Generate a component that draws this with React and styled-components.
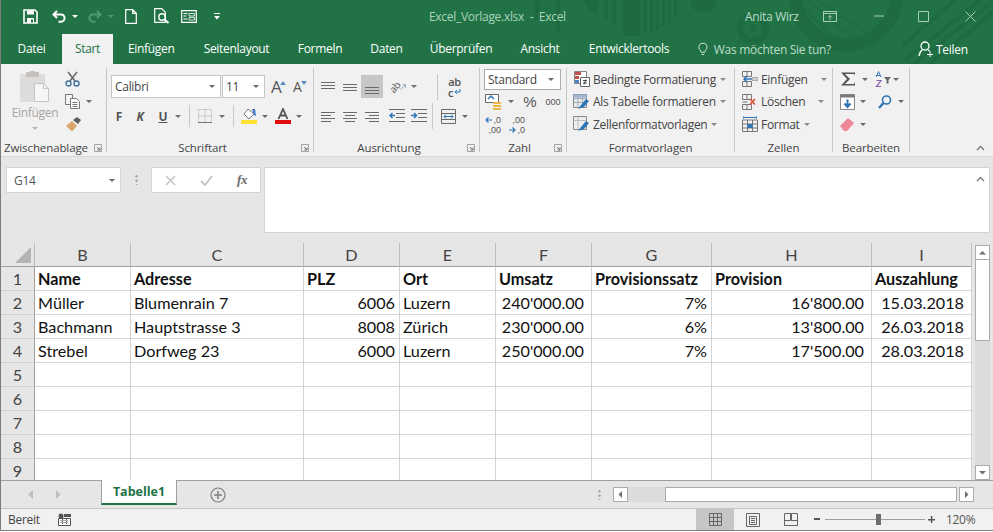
import React from 'react';
import styled, { createGlobalStyle } from 'styled-components';

const green = '#217346';
const ui = '"Open Sans", "Noto Sans", sans-serif';

const Global = createGlobalStyle`
  html, body { margin: 0; padding: 0; background: #fff; }
  * { box-sizing: border-box; }
`;

const Window = styled.div`
  width: 993px;
  height: 531px;
  display: flex;
  flex-direction: column;
  border-left: 1px solid #7d7d7d;
  font-family: ${ui};
  font-size: 12px;
  letter-spacing: -0.3px;
  color: #444;
  overflow: hidden;
`;

/* title + tabs */
const Head = styled.header`
  position: relative;
  height: 64px;
  background: ${green};
  flex: none;
`;

const Deco = styled.svg`
  position: absolute;
  left: -1px;
  top: 0;
`;

const TitleBar = styled.div`
  position: relative;
  height: 32px;
  display: flex;
  align-items: center;
  padding-left: 22px;
`;

const Slot = styled.span`
  display: inline-flex;
  align-items: center;
  justify-content: center;
  flex: none;
  width: ${p => p.$w}px;
  margin-left: ${p => p.$ml || 0}px;
  color: ${p => p.$color || 'inherit'};
`;

const Arrow = styled.span`
  flex: none;
  width: 0;
  height: 0;
  margin-left: ${p => p.$ml || 0}px;
  border-left: 3px solid transparent;
  border-right: 3px solid transparent;
  border-top: 3px solid ${p => p.$color || '#6b6b6b'};
`;

const FileName = styled.span`
  margin-left: 209px;
  width: 134px;
  color: #a9d4bb;
  font-size: 12px;
  white-space: pre;
`;

const UserName = styled.span`
  margin-left: 182px;
  width: 56px;
  color: #b9dcc8;
  font-size: 12px;
  white-space: nowrap;
`;

const TabRow = styled.nav`
  position: relative;
  height: 32px;
  display: flex;
  align-items: flex-end;
`;

const Tab = styled.div`
  flex: none;
  width: ${p => p.$w}px;
  height: 30px;
  text-align: center;
  line-height: 29px;
  color: ${p => (p.$active ? green : '#fff')};
  background: ${p => (p.$active ? '#f1f1f1' : 'transparent')};
  white-space: nowrap;
`;

const Search = styled.div`
  flex: none;
  width: 133px;
  display: flex;
  align-items: center;
  height: 30px;
  margin-left: 14.5px;
  color: #bcdcc9;
  white-space: nowrap;
  gap: 6px;
`;

const Share = styled.div`
  flex: none;
  display: flex;
  align-items: center;
  height: 30px;
  margin-left: 87px;
  color: #fff;
  gap: 2px;
`;

/* ribbon */
const Ribbon = styled.section`
  position: relative;
  height: 93px;
  flex: none;
  display: flex;
  padding-top: 4px;
  background: #f1f1f1;
  border-bottom: 1px solid #d6d6d6;
`;

const Group = styled.div`
  flex: none;
  width: ${p => p.$w}px;
  height: 84px;
  display: flex;
  flex-direction: column;
  border-right: 1px solid #c8c8c8;
`;

const GroupBody = styled.div`
  flex: 1;
  min-height: 0;
  display: ${p => (p.$row ? 'flex' : 'block')};
  padding-top: ${p => p.$top || 0}px;
`;

const GroupFoot = styled.div`
  flex: none;
  height: 14px;
  display: flex;
  padding-left: ${p => p.$pl || 0}px;
  justify-content: ${p => (p.$left ? 'flex-start' : 'center')};
  line-height: 20px;
  font-size: 11.5px;
  letter-spacing: -0.1px;
  color: #454545;
  white-space: nowrap;
`;

const FootLabel = styled.span`
  flex: ${p => (p.$fill ? 1 : 'none')};
  text-align: ${p => (p.$left ? 'left' : 'center')};
  padding-left: ${p => p.$pl || 0}px;
`;

const Launcher = styled.span`
  flex: none;
  width: 15px;
  display: flex;
  align-items: center;
  padding: 6px 0 0 3px;
`;

const Line = styled.div`
  height: ${p => p.$h}px;
  margin-top: ${p => p.$mt || 0}px;
  padding-left: ${p => p.$pl || 0}px;
  display: flex;
  align-items: center;
  white-space: nowrap;
  color: #444;
`;

const Column = styled.div`
  flex: none;
  width: ${p => p.$w}px;
  margin-left: ${p => p.$ml || 0}px;
  padding-top: ${p => p.$top || 0}px;
  display: flex;
  flex-direction: column;
  align-items: ${p => p.$align || 'center'};
`;

const PasteLabel = styled.span`
  margin: 3px 0 6px;
  color: #a6a6a6;
  line-height: 16px;
`;

const StyleName = styled.span`
  margin-left: 3px;
`;

const ComboBox = styled.div`
  flex: none;
  width: ${p => p.$w}px;
  height: ${p => p.$h || 23}px;
  margin-left: ${p => p.$ml || 0}px;
  display: flex;
  align-items: center;
  justify-content: space-between;
  padding: 0 ${p => p.$pr || 5}px 0 3px;
  background: #fff;
  border: 1px solid ${p => p.$line || '#c6c6c6'};
  font-size: 12px;
  color: #444;
`;

const VDivider = styled.span`
  flex: none;
  width: 1px;
  height: ${p => p.$h || 22}px;
  margin-left: ${p => p.$ml}px;
  background: #c8c8c8;
`;

const Letter = styled.span`
  flex: none;
  width: ${p => p.$w || 12}px;
  margin-left: ${p => p.$ml || 0}px;
  text-align: center;
  font: ${p => (p.$italic ? 'italic ' : '')}700 12px ${ui};
  color: #555;
  text-decoration: ${p => (p.$under ? 'underline' : 'none')};
`;

const GrowFont = styled.span`
  flex: none;
  width: ${p => p.$w}px;
  margin-left: ${p => p.$ml}px;
  display: flex;
  align-items: flex-start;
  justify-content: flex-start;
`;

const BigA = styled.span`
  font: 400 ${p => p.$size}px/18px ${ui};
  color: #555;
`;

const GrowMark = styled.span`
  display: flex;
  margin: 3px 0 0 -1px;
`;

const AlignSelected = styled.span`
  flex: none;
  width: 22px;
  height: 23px;
  margin-left: 4px;
  display: flex;
  align-items: center;
  justify-content: center;
  background: #c6c6c6;
`;

const Orient = styled.span`
  flex: none;
  width: 17px;
  height: 17px;
  margin-left: 6px;
  display: flex;
  align-items: center;
  justify-content: flex-start;
  overflow: visible;
`;

const OrientText = styled.span`
  display: block;
  font-size: 10px;
  line-height: 10px;
  color: #555;
  transform: rotate(-50deg);
`;

const WrapStack = styled.span`
  flex: none;
  width: 15px;
  margin-left: 9px;
  display: flex;
  flex-direction: column;
  align-items: center;
  font-size: 11px;
  font-weight: 600;
  line-height: 11px;
  color: #555;
`;

const WrapRow = styled.span`
  display: flex;
  align-items: center;
  gap: 1px;
`;

const NumberText = styled.span`
  flex: none;
  width: ${p => p.$w}px;
  margin-left: ${p => p.$ml || 0}px;
  text-align: center;
  color: #555;
  font-size: ${p => p.$size}px;
  letter-spacing: 0;
  font-family: "Liberation Sans", sans-serif;
`;

const DecimalStack = styled.span`
  flex: none;
  width: 16px;
  margin-left: ${p => p.$ml || 0}px;
  display: flex;
  flex-direction: column;
  font: 400 9px/10px "Liberation Sans", sans-serif;
  letter-spacing: 0;
  color: #555;
`;

const DecimalRow = styled.span`
  display: flex;
  align-items: center;
  justify-content: flex-end;
  gap: 1px;
`;

const Collapse = styled.span`
  position: absolute;
  right: 8px;
  bottom: 5px;
  display: flex;
`;

/* formula bar */
const FormulaArea = styled.section`
  height: 86px;
  flex: none;
  display: flex;
  align-items: flex-start;
  padding: 10px 3px 0 5px;
  background: #e6e6e6;
`;

const NameBox = styled.div`
  flex: none;
  width: 115px;
  height: 26px;
  display: flex;
  align-items: center;
  justify-content: space-between;
  padding: 0 5px 0 7px;
  background: #fff;
  border: 1px solid #d4d4d4;
  font-size: 12px;
  color: #555;
`;

const Dots = styled.span`
  flex: none;
  width: 3px;
  height: ${p => p.$h || 11}px;
  margin: ${p => p.$mt}px ${p => p.$mr}px 0 ${p => p.$ml}px;
  background-image: radial-gradient(circle, #a9a9a9 1.2px, transparent 1.4px);
  background-size: 3px 4.5px;
`;

const FxBox = styled.div`
  flex: none;
  width: 110px;
  height: 26px;
  display: flex;
  align-items: center;
  background: #fff;
  border: 1px solid #d4d4d4;
`;

const FxLabel = styled.span`
  width: 36px;
  margin-left: 11px;
  text-align: center;
  font: italic 700 13px "Liberation Serif", serif;
  color: #6a6a6a;
`;

const FormulaInput = styled.div`
  flex: 1;
  height: 66px;
  margin-left: 3px;
  display: flex;
  justify-content: flex-end;
  padding: 8px 4px 0 0;
  background: #fff;
  border: 1px solid #d4d4d4;
`;

/* sheet */
const SheetArea = styled.section`
  height: 237px;
  flex: none;
  display: flex;
  background: #e6e6e6;
`;

const Sheet = styled.div`
  flex: none;
  width: 971px;
  height: 237px;
  overflow: hidden;
  display: grid;
  grid-template-columns: 34px 96px 173px 96px 96px 96px 120px 160px 100px;
  grid-auto-rows: 24px;
  font-family: Lato, "Liberation Sans", sans-serif;
  font-size: 16.2px;
  letter-spacing: 0;
  color: #111;
`;

const Corner = styled.div`
  display: flex;
  align-items: flex-end;
  justify-content: flex-end;
  padding: 0 3px 3px 0;
  background: #e6e6e6;
  border-right: 1px solid #bdbdbd;
  border-bottom: 1px solid #9f9f9f;
`;

const ColHead = styled.div`
  text-align: center;
  line-height: 23px;
  color: #444;
  background: #e6e6e6;
  border-right: 1px solid #bdbdbd;
  border-bottom: 1px solid #9f9f9f;
`;

const RowHead = styled.div`
  text-align: center;
  line-height: 24px;
  color: #444;
  background: #e6e6e6;
  border-right: 1px solid #9f9f9f;
  border-bottom: 1px solid #d0d0d0;
`;

const Cell = styled.div`
  padding: 0 ${p => p.$pr ?? 3}px 0 3px;
  line-height: 23px;
  background: #fff;
  text-align: ${p => (p.$right ? 'right' : 'left')};
  font-weight: ${p => (p.$bold ? 700 : 400)};
  white-space: nowrap;
  border-right: 1px solid #d4d4d4;
  border-bottom: 1px solid #d4d4d4;
`;

const VScroll = styled.div`
  flex: none;
  width: 15px;
  margin: 2px 0 0 3px;
  display: flex;
  flex-direction: column;
  background: #dcdcdc;
`;

const ScrollBtn = styled.div`
  flex: none;
  width: ${p => p.$w || 15}px;
  height: ${p => p.$h || 15}px;
  margin-left: ${p => p.$ml || 0}px;
  display: flex;
  align-items: center;
  justify-content: center;
  background: #fff;
  border: 1px solid #ababab;
`;

const VThumb = styled.div`
  flex: none;
  height: 82px;
  margin-top: -1px;
  background: #fff;
  border: 1px solid #ababab;
`;

const VTrack = styled.div`
  flex: 1;
`;

/* sheet tabs */
const TabBar = styled.section`
  height: 29px;
  flex: none;
  display: flex;
  align-items: flex-start;
  background: #e6e6e6;
  border-top: 1px solid #9f9f9f;
  border-bottom: 1px solid #c6c6c6;
`;

const NavSlot = styled(Slot)`
  margin-top: ${p => p.$mt}px;
`;

const SheetTab = styled.div`
  flex: none;
  width: 76px;
  height: 25px;
  margin: -1px 0 0 40px;
  text-align: center;
  line-height: 24px;
  font-weight: 700;
  font-size: 12.5px;
  letter-spacing: 0;
  color: ${green};
  background: #fff;
  border-left: 1px solid #9f9f9f;
  border-right: 1px solid #9f9f9f;
  border-bottom: 2px solid ${green};
`;

const HScroll = styled.div`
  flex: none;
  display: flex;
  margin: 6px 0 0 12px;
`;

const HTrack = styled.div`
  flex: none;
  width: 37px;
  height: 15px;
  background: #dcdcdc;
`;

const HThumb = styled.div`
  flex: none;
  width: 292px;
  height: 15px;
  background: #fff;
  border: 1px solid #ababab;
`;

/* status */
const StatusBar = styled.footer`
  flex: 1;
  display: flex;
  align-items: center;
  background: #f1f1f1;
  border-bottom: 1px solid #7d7d7d;
  font-size: 12px;
  color: #444;
`;

const Ready = styled.span`
  width: 36px;
  margin-left: 7px;
`;

const ViewBtn = styled.span`
  flex: none;
  width: 38px;
  height: 21px;
  margin-left: ${p => p.$ml || 0}px;
  display: flex;
  align-items: center;
  justify-content: center;
  background: ${p => (p.$on ? '#c6c6c6' : 'transparent')};
`;

const ZoomTrack = styled.span`
  position: relative;
  flex: none;
  width: 100px;
  height: 1px;
  margin-left: 5px;
  background: #a0a0a0;
`;

const ZoomThumb = styled.span`
  position: absolute;
  left: 51px;
  top: -5px;
  width: 5px;
  height: 11px;
  background: #6e6e6e;
`;

const ZoomValue = styled.span`
  margin-left: 11px;
  color: #555;
`;

/* drawings */
const Svg = ({ w, h, children }) => (
  <svg width={w} height={h} viewBox={`0 0 ${w} ${h}`} fill="none">{children}</svg>
);

const SaveIcon = () => (
  <Svg w={15} h={15}>
    <path d="M1 1h11l2 2v11H1z" stroke="#fff" strokeWidth="1.6" />
    <path d="M4 1.5h7v4H4zM4 9h7v5H4z" fill="#fff" />
    <path d="M8 10.5h2v3H8z" fill={green} />
  </Svg>
);
const UndoIcon = ({ color, flip }) => (
  <Svg w={15} h={13}>
    <g transform={flip ? 'translate(15 0) scale(-1 1)' : undefined}>
      <path d="M5 1 1.5 4.5 5 8M1.5 4.5H9a3.6 3.6 0 0 1 0 7.2H6.5" stroke={color} strokeWidth="2" />
    </g>
  </Svg>
);
const PageIcon = () => (
  <Svg w={12} h={15}>
    <path d="M.7.7h7l3.6 3.6v10H.7zM7.7.7v3.6h3.6" stroke="#fff" strokeWidth="1.2" />
  </Svg>
);
const PreviewIcon = () => (
  <Svg w={16} h={16}>
    <path d="M.7.7h7l3.6 3.6v10H.7z" stroke="#fff" strokeWidth="1.2" />
    <circle cx="8" cy="9" r="3.2" stroke="#fff" strokeWidth="1.4" />
    <path d="m10.5 11.5 4 3.5" stroke="#fff" strokeWidth="2" />
  </Svg>
);
const FormIcon = () => (
  <Svg w={16} h={13}>
    <path d="M.7.7h14.6v11.6H.7z" stroke="#fff" strokeWidth="1.2" />
    <path d="M2.5 3.5h4M2.5 6h3M2.5 9h4" stroke="#fff" />
    <path d="M8 3.500h5.500v2.500H8zM8 7.500h5.500V10H8z" stroke="#fff" strokeWidth=".8" />
  </Svg>
);
const CustomIcon = () => (
  <Svg w={6} h={8}>
    <path d="M0 1.5h6" stroke="#fff" />
    <path d="m0 4 3 3.5L6 4z" fill="#fff" />
  </Svg>
);
const RestoreIcon = () => (
  <Svg w={14} h={11}>
    <path d="M.5.500h13v10H.5zM.5 2.500h13" stroke="#a5cfb7" />
    <path d="M7 9V4.500M5 6.500l2-2 2 2" stroke="#a5cfb7" />
  </Svg>
);
const MinIcon = () => <Svg w={10} h={10}><path d="M0 5h10" stroke="#a5cfb7" /></Svg>;
const MaxIcon = () => <Svg w={11} h={11}><path d="M.5.500h10v10H.5z" stroke="#a5cfb7" /></Svg>;
const CloseIcon = () => <Svg w={11} h={11}><path d="m.5.500 10 10M10.500.500l-10 10" stroke="#a5cfb7" /></Svg>;

const BulbIcon = () => (
  <Svg w={11} h={15}>
    <path d="M3.500 10.500C3 8 1 7.500 1 5a4.500 4.500 0 0 1 9 0c0 2.500-2 3-2.500 5.500zM4 13h3" stroke="#e8f3ec" />
  </Svg>
);
const PersonIcon = () => (
  <Svg w={16} h={16}>
    <circle cx="7" cy="5" r="4" stroke="#fff" strokeWidth="1.3" />
    <path d="M1 15c.5-3 2-5.500 3.500-6.500M9.500 8.500c1 .5 1.800 1.200 2.300 2" stroke="#fff" strokeWidth="1.3" />
    <path d="M9 13.500h6M12 10.500v6" stroke="#fff" />
  </Svg>
);

const PasteIcon = () => (
  <Svg w={30} h={31}>
    <path d="M0 3h25v28H0z" fill="#dedcda" />
    <path d="M6 1h13v5H6z" fill="#c4c1bf" />
    <path d="M10 0h5v2h-5z" fill="#c4c1bf" />
    <path d="M14.500 12.500h9l5 5v13h-14z" fill="#f6f6f6" stroke="#c4c4c4" />
    <path d="M23.500 12.500v5h5" stroke="#c4c4c4" />
  </Svg>
);
const ScissorsIcon = () => (
  <Svg w={15} h={16}>
    <path d="M3 1l7 9M12 1l-7 9" stroke="#6a6a6a" strokeWidth="1.6" />
    <circle cx="3.500" cy="12.500" r="2.500" stroke="#44719f" strokeWidth="1.4" />
    <circle cx="11.500" cy="12.500" r="2.500" stroke="#44719f" strokeWidth="1.4" />
  </Svg>
);
const CopyIcon = () => (
  <Svg w={15} h={15}>
    <path d="M.5.500h7v10h-7z" fill="#f4f4f4" stroke="#777" />
    <path d="M5.500 4.500h6l3 3v7h-9z" fill="#fff" stroke="#777" />
    <path d="M7.500 8.500h5M7.500 10.500h5M7.500 12.500h5" stroke="#777" />
  </Svg>
);
const BrushIcon = () => (
  <Svg w={17} h={15}>
    <path d="m1 9 6-5 5 5-5 5.500z" fill="#d9a76a" />
    <path d="m8 3 4-3 4 3-3 4z" fill="#5f5f5f" />
  </Svg>
);
const Launch = () => (
  <Svg w={8} h={8}>
    <path d="M.5.500h7v7h-7z" stroke="#a3a3a3" />
    <path d="M3 3l3 3M6 3.500V6H3.500" stroke="#6e6e6e" />
  </Svg>
);
const Triangle = ({ up, color }) => (
  <Svg w={6} h={4}><path d={up ? 'M0 4l3-4 3 4z' : 'M0 0l3 4 3-4z'} fill={color} /></Svg>
);
const BordersIcon = () => (
  <Svg w={14} h={14}>
    <path d="M.5.500h13v13H.5zM7 .5v13M.5 7h13" stroke="#a8a8a8" strokeDasharray="1 1" />
    <path d="M0 13.500h14" stroke="#777" />
  </Svg>
);
const FillIcon = () => (
  <Svg w={16} h={16}>
    <path d="m7 1 6 5-5 5-5-5z" fill="#fff" stroke="#777" />
    <path d="M11 1h3l1 7-2-1z" fill="#4472c4" />
    <path d="M0 12h16v4H0z" fill="#ffe433" />
  </Svg>
);
const FontColorIcon = () => (
  <Svg w={16} h={16}>
    <path d="M3.500 11 8 1l4.500 10M5.300 7.500h5.400" stroke="#555" strokeWidth="1.800" />
    <path d="M0 12h16v4H0z" fill="#e00b0b" />
  </Svg>
);
const Lines = ({ rows, color = '#6a6a6a', w = 14 }) => (
  <Svg w={w} h={14}>
    {rows.map(([y, x1, x2]) => <path key={y} d={`M${x1} ${y}.5H${x2}`} stroke={color} />)}
  </Svg>
);
const OrientArrow = () => (
  <Svg w={9} h={10}>
    <path d="m1 9 7-7M4 1.500h4.500V6" stroke="#5b7fa8" />
  </Svg>
);
const IndentIcon = ({ flip }) => (
  <Svg w={16} h={14}>
    <path d="M0 .5h16M7 4.500h9M7 8.500h9M0 12.500h16" stroke="#6a6a6a" />
    <path d={flip ? 'M0 6.500h5M3 4l2.500 2.500L3 9' : 'M6 6.500H1M3.500 4 1 6.500 3.500 9'} stroke="#2e75b6" strokeWidth="1.500" />
  </Svg>
);
const MergeIcon = () => (
  <Svg w={15} h={15}>
    <path d="M.5.500h14v14H.5zM.5 4.500h14M.5 10.500h14" stroke="#6a6a6a" />
    <path d="M3 7.500h9M5 5.500l-2 2 2 2M10 5.500l2 2-2 2" stroke="#2e75b6" />
  </Svg>
);
const WrapIcon = () => (
  <Svg w={7} h={6}><path d="M6 0v3H1M3 1 1 3l2 2" stroke="#2e75b6" /></Svg>
);
const CurrencyIcon = () => (
  <Svg w={18} h={18}>
    <path d="M.5 1.500h13v8H.5z" fill="#fff" stroke="#666" />
    <path d="M3 6 6 3l3 3" stroke="#2e75b6" strokeWidth="1.500" />
    <path d="M8 9h8v2H8zM8 12h8v2H8zM8 15h8v2H8z" fill="#eeb54a" />
  </Svg>
);
const DecimalArrow = ({ flip }) => (
  <Svg w={7} h={6}>
    <path d={flip ? 'M0 3h6M3.500 .5 6 3 3.500 5.500' : 'M7 3H1M3.500 .5 1 3l2.500 2.500'} stroke="#2e75b6" strokeWidth="1.200" />
  </Svg>
);
const CondIcon = () => (
  <Svg w={16} h={16}>
    <path d="M.5.500h12v12H.5z" fill="#fff" stroke="#888" />
    <path d="M1 1h6v3H1z" fill="#c0504d" />
    <path d="M1 5h4v3H1z" fill="#c0504d" />
    <path d="M1 9h4v3H1z" fill="#4f81bd" />
    <path d="M6.500 6.500h9v9h-9z" fill="#fff" stroke="#666" />
    <path d="M9 9.500h4M9 12h4M12 8.500l-2 5" stroke="#444" />
  </Svg>
);
const TableIcon = () => (
  <Svg w={17} h={16}>
    <path d="M.5.500h13v13H.5z" fill="#e5ecf5" stroke="#888" />
    <path d="M.5 4.500h13M.5 8.500h13M5 .5v13M9.500.5v13" stroke="#aaa" />
    <path d="M.5.500h13v3H.5z" fill="#9db6d4" />
    <path d="m5 15 3-4 5-6 3 2-5 6z" fill="#2e75b6" />
  </Svg>
);
const StyleIcon = () => (
  <Svg w={17} h={16}>
    <path d="M.5.500h13v13H.5z" fill="#eee" stroke="#888" />
    <path d="M.5 4.500h13M5 .5v13" stroke="#bbb" />
    <path d="m5 15 3-4 5-6 3 2-5 6z" fill="#2e75b6" />
  </Svg>
);
const InsertCellIcon = () => (
  <Svg w={16} h={16}>
    <path d="M.5.500h9v5h-9zM.5 10.500h9v5h-9zM5 .5v5M5 10.500v5M9 5.500H6" stroke="#777" />
    <path d="M11 8H2M5 5 2 8l3 3" stroke="#2e75b6" strokeWidth="1.500" />
    <path d="M10 6.500h6v3h-6z" fill="#d0d0d0" stroke="#888" strokeWidth=".6" />
  </Svg>
);
const DeleteCellIcon = () => (
  <Svg w={16} h={16}>
    <path d="M.5.500h9v5h-9zM.5 10.500h9v5h-9zM5 .5v5M5 10.500v5M.5 8h5" stroke="#777" />
    <path d="m8 5 5 5.500M13 5l-5 5.500" stroke="#d9502a" strokeWidth="1.600" />
  </Svg>
);
const FormatCellIcon = () => (
  <Svg w={16} h={16}>
    <path d="M1.500.500v2M14.500.500v2M2 1.500h12" stroke="#2e75b6" />
    <path d="M.5 4h15v11.500H.5zM.5 8h15M.5 12h15M5.500 4v11.500M10.500 4v11.500" stroke="#777" />
    <path d="M5.500 8h5v4h-5z" fill="#2e75b6" />
  </Svg>
);
const SumIcon = () => (
  <Svg w={16} h={14}>
    <path d="M1 .5h14v3l-1-1.500H5L10 7l-5 5h9l1-2v3.500H1L7 7z" fill="#555" />
  </Svg>
);
const SortIcon = () => (
  <Svg w={16} h={17}>
    <path d="M1 6l2.500-5.500L6 6M2 4.500h3" stroke="#3a74b5" />
    <path d="M1.500 9.500H6L1.500 15.500H6" stroke="#8a5eb0" strokeWidth="1.200" />
    <path d="M9 6h7l-2.500 3v3.500h-2V9z" fill="#666" />
  </Svg>
);
const FillDownIcon = () => (
  <Svg w={15} h={16}>
    <path d="M.5.500h14v15H.5z" fill="#fff" stroke="#888" />
    <path d="M.5.500h14v3H.5z" fill="#7a7a7a" />
    <path d="M7.500 5.500v7M4.500 9.500l3 3.500 3-3.500" stroke="#2e75b6" strokeWidth="2" />
  </Svg>
);
const FindIcon = () => (
  <Svg w={14} h={14}>
    <circle cx="8.500" cy="5" r="4" stroke="#2e75b6" strokeWidth="1.600" />
    <path d="M5.500 8 1 13" stroke="#2e75b6" strokeWidth="2.400" />
  </Svg>
);
const EraserIcon = () => (
  <Svg w={14} h={13}>
    <path d="M0 8 8 0l6 5-7 8H4z" fill="#ee8797" />
  </Svg>
);
const Chevron = () => (
  <Svg w={9} h={6}><path d="m1 5 3.500-3.500L8 5" stroke="#777" strokeWidth="1.300" /></Svg>
);
const XIcon = () => <Svg w={11} h={11}><path d="m1 1 9 9M10 1l-9 9" stroke="#c4c4c4" strokeWidth="1.500" /></Svg>;
const CheckIcon = () => <Svg w={13} h={11}><path d="m1 6 4 4 7-9" stroke="#c4c4c4" strokeWidth="1.800" /></Svg>;
const CornerIcon = () => <Svg w={16} h={16}><path d="M16 0v16H0z" fill="#b4b4b4" /></Svg>;
const SmallTri = ({ dir }) => (
  <Svg w={7} h={7}>
    <path
      d={{ up: 'M0 5.500 3.500 2 7 5.500z', down: 'M0 2h7L3.500 5.500z', left: 'M5 0v7L1.500 3.500z', right: 'M2 0v7l3.500-3.500z' }[dir]}
      fill="#6f6f6f"
    />
  </Svg>
);
const Chev = ({ right }) => (
  <Svg w={5} h={9}><path d={right ? 'M0 0v9l5-4.500z' : 'M5 0v9L0 4.500z'} fill="#c0c0c0" /></Svg>
);
const PlusCircle = () => (
  <Svg w={16} h={16}>
    <circle cx="8" cy="8" r="7" stroke="#7f7f7f" strokeWidth="1.200" />
    <path d="M8 4v8M4 8h8" stroke="#7f7f7f" strokeWidth="1.500" />
  </Svg>
);
const MacroIcon = () => (
  <Svg w={13} h={13}>
    <circle cx="3" cy="3" r="2.500" fill="#555" />
    <path d="M6 1h7v3H6z" fill="#555" />
    <path d="M.5 5.500h12v7H.5z" fill="#fff" stroke="#555" />
    <path d="M2.500 7.500h8M2.500 9.500h8M4.500 6v6M8.500 6v6" stroke="#555" strokeDasharray="1 1" />
  </Svg>
);
const GridView = () => (
  <Svg w={13} h={13}>
    <path d="M.5.500h12v12H.5zM4.500.5v12M8.500.5v12M.5 4.500h12M.5 8.500h12" stroke="#666" />
  </Svg>
);
const PageView = () => (
  <Svg w={14} h={14}>
    <path d="M.5.500h13v13H.5z" stroke="#666" />
    <path d="M3.500 3.500h7v8h-7zM5 5.500h4M5 7.500h4M5 9.500h4" stroke="#666" />
  </Svg>
);
const BreakView = () => (
  <Svg w={14} h={13}>
    <path d="M.5.500h13v12H.5zM.5 7.500h6v-7M6.500 7.500h1M7.500 7.500v-7M7.500 7.500h6" stroke="#666" />
  </Svg>
);

const tabs = [
  ['Datei', 61], ['Start', 51], ['Einfügen', 76.5], ['Seitenlayout', 94], ['Formeln', 73],
  ['Daten', 60], ['Überprüfen', 89], ['Ansicht', 69], ['Entwicklertools', 109],
];

const columns = ['B', 'C', 'D', 'E', 'F', 'G', 'H', 'I'];

const headerRow = ['Name', 'Adresse', 'PLZ', 'Ort', 'Umsatz', 'Provisionssatz', 'Provision', 'Auszahlung'];

const people = [
  ['Müller', 'Blumenrain 7', '6006', 'Luzern', "240'000.00", '7%', "16'800.00", '15.03.2018'],
  ['Bachmann', 'Hauptstrasse 3', '8008', 'Zürich', "230'000.00", '6%', "13'800.00", '26.03.2018'],
  ['Strebel', 'Dorfweg 23', '6000', 'Luzern', "250'000.00", '7%', "17'500.00", '28.03.2018'],
];

// right aligned columns, with the padding their number format leaves
const rightPad = { 2: 4, 4: 7, 5: 4, 6: 7, 7: 7 };

const Style = ({ icon, label, caretAt }) => (
  <Line $h={22.5} $pl={6}>
    <Slot $w={17}>{icon}</Slot>
    <StyleName>{label}</StyleName>
    <Arrow $ml={caretAt} $color="#8a8a8a" />
  </Line>
);

export default function App() {
  return (
    <Window>
      <Global />
      <Head>
        <Deco width="993" height="64" viewBox="0 0 993 64" fill="none">
          <g fill="#1f6b41">
            <path d="M535 0h5v20h-5zM556 0h4v32h-4zM584 0h16l-3 12h-7zM604 0h4v18h-4zM612 0h4v24h-4zM623 0h17v36h-17zM644 0h3v34h-3zM650 0h3v34h-3zM656 0h3v30h-3zM662 0h3v26h-3zM668 0h3v22h-3zM674 0h3v16h-3z" />
            <circle cx="703" cy="0" r="13" />
          </g>
          <circle cx="753" cy="28" r="13" stroke="#1f6b41" strokeWidth="7" />
          <circle cx="753" cy="28" r="4" fill="#1f6b41" />
          <circle cx="846" cy="-6" r="51" stroke="#1f6b41" strokeWidth="13" />
          <path d="M791 12 828 50M800 4 842 46M809 0 854 40M818 0 866 32" stroke="#1f6b41" strokeWidth="2.500" opacity=".7" />
          <path d="M993 1 914 64M993 12 930 64M980 0 905 60M955 0 902 46" stroke="#1f6b41" strokeWidth="4" />
        </Deco>
        <TitleBar>
          <Slot $w={15}><SaveIcon /></Slot>
          <Slot $w={15} $ml={14}><UndoIcon color="#fff" /></Slot>
          <Arrow $ml={5} $color="#fff" />
          <Slot $w={15} $ml={9}><UndoIcon color="#4e9a70" flip /></Slot>
          <Arrow $ml={6} $color="#4e9a70" />
          <Slot $w={12} $ml={11}><PageIcon /></Slot>
          <Slot $w={16} $ml={17}><PreviewIcon /></Slot>
          <Slot $w={16} $ml={11}><FormIcon /></Slot>
          <Slot $w={6} $ml={17}><CustomIcon /></Slot>
          <FileName>Excel_Vorlage.xlsx  -  Excel</FileName>
          <UserName>Anita Wirz</UserName>
          <Slot $w={14} $ml={22}><RestoreIcon /></Slot>
          <Slot $w={10} $ml={37}><MinIcon /></Slot>
          <Slot $w={11} $ml={34}><MaxIcon /></Slot>
          <Slot $w={11} $ml={36}><CloseIcon /></Slot>
        </TitleBar>
        <TabRow>
          {tabs.map(([name, w]) => (
            <Tab key={name} $w={w} $active={name === 'Start'}>{name}</Tab>
          ))}
          <Search><BulbIcon />Was möchten Sie tun?</Search>
          <Share><PersonIcon />Teilen</Share>
        </TabRow>
      </Head>

      <Ribbon>
        <Group $w={106}>
          <GroupBody $row>
            <Column $w={58} $ml={5} $top={3}>
              <PasteIcon />
              <PasteLabel>Einfügen</PasteLabel>
              <Arrow $color="#b5b5b5" />
            </Column>
            <Column $w={30} $ml={1} $align="flex-start">
              <Line $h={22}><ScissorsIcon /></Line>
              <Line $h={23}><CopyIcon /><Arrow $ml={6} /></Line>
              <Line $h={23}><BrushIcon /></Line>
            </Column>
          </GroupBody>
          <GroupFoot $pl={3} $left>
            <FootLabel $fill $left>Zwischenablage</FootLabel>
            <Launcher><Launch /></Launcher>
          </GroupFoot>
        </Group>

        <Group $w={207}>
          <GroupBody $top={7}>
            <Line $h={23} $pl={4}>
              <ComboBox $w={110}>Calibri<Arrow /></ComboBox>
              <ComboBox $w={43} $ml={1}>11<Arrow /></ComboBox>
              <GrowFont $w={16} $ml={6}>
                <BigA $size={17}>A</BigA>
                <GrowMark><Triangle up color="#5b8fc7" /></GrowMark>
              </GrowFont>
              <GrowFont $w={16} $ml={6}>
                <BigA $size={14}>A</BigA>
                <GrowMark><Triangle color="#5b8fc7" /></GrowMark>
              </GrowFont>
            </Line>
            <Line $h={24} $mt={6} $pl={6}>
              <Letter>F</Letter>
              <Letter $italic $ml={9}>K</Letter>
              <Letter $under $ml={11}>U</Letter>
              <Arrow $ml={6} />
              <VDivider $ml={8} />
              <Slot $w={14} $ml={8}><BordersIcon /></Slot>
              <Arrow $ml={7} />
              <VDivider $ml={8} />
              <Slot $w={16} $ml={7}><FillIcon /></Slot>
              <Arrow $ml={5} />
              <Slot $w={16} $ml={7}><FontColorIcon /></Slot>
              <Arrow $ml={5} />
            </Line>
          </GroupBody>
          <GroupFoot>
            <FootLabel $fill>Schriftart</FootLabel>
            <Launcher><Launch /></Launcher>
          </GroupFoot>
        </Group>

        <Group $w={166}>
          <GroupBody $top={7}>
            <Line $h={23} $pl={7}>
              <Lines rows={[[2, 0, 14], [5, 0, 14], [8, 0, 14]]} />
              <Slot $w={14} $ml={8}><Lines rows={[[4, 0, 14], [7, 0, 14], [10, 0, 14]]} /></Slot>
              <AlignSelected><Lines rows={[[7, 0, 14], [10, 0, 14], [13, 0, 14]]} /></AlignSelected>
              <Orient><OrientText>ab</OrientText><OrientArrow /></Orient>
              <Arrow $ml={5} />
              <VDivider $ml={20} $h={26} />
              <WrapStack>
                <span>ab</span>
                <WrapRow>c<WrapIcon /></WrapRow>
              </WrapStack>
            </Line>
            <Line $h={24} $mt={6} $pl={7}>
              <Lines rows={[[3, 0, 14], [6, 0, 10], [9, 0, 14], [12, 0, 10]]} />
              <Slot $w={14} $ml={8}><Lines rows={[[3, 0, 14], [6, 2, 12], [9, 0, 14], [12, 2, 12]]} /></Slot>
              <Slot $w={14} $ml={8}><Lines rows={[[3, 0, 14], [6, 4, 14], [9, 0, 14], [12, 4, 14]]} /></Slot>
              <Slot $w={16} $ml={10}><IndentIcon /></Slot>
              <Slot $w={16} $ml={6}><IndentIcon flip /></Slot>
              <VDivider $ml={5} $h={26} />
              <Slot $w={15} $ml={8}><MergeIcon /></Slot>
              <Arrow $ml={6} />
            </Line>
          </GroupBody>
          <GroupFoot>
            <FootLabel $fill>Ausrichtung</FootLabel>
            <Launcher><Launch /></Launcher>
          </GroupFoot>
        </Group>

        <Group $w={87}>
          <GroupBody>
            <Line $h={22} $pl={4}>
              <ComboBox $w={77} $h={21} $line="#ababab" $pr={6}>Standard<Arrow /></ComboBox>
            </Line>
            <Line $h={23} $pl={5}>
              <Slot $w={18}><CurrencyIcon /></Slot>
              <Arrow $ml={5} />
              <NumberText $w={14} $size={15} $ml={9}>%</NumberText>
              <NumberText $w={18} $size={9} $ml={7}>000</NumberText>
            </Line>
            <Line $h={23} $pl={5}>
              <DecimalStack>
                <DecimalRow><DecimalArrow />,0</DecimalRow>
                <DecimalRow>,00</DecimalRow>
              </DecimalStack>
              <DecimalStack $ml={8}>
                <DecimalRow>,00</DecimalRow>
                <DecimalRow><DecimalArrow flip />,0</DecimalRow>
              </DecimalStack>
            </Line>
          </GroupBody>
          <GroupFoot>
            <FootLabel $fill $pl={8}>Zahl</FootLabel>
            <Launcher><Launch /></Launcher>
          </GroupFoot>
        </Group>

        <Group $w={168}>
          <GroupBody>
            <Style icon={<CondIcon />} label="Bedingte Formatierung" caretAt={4} />
            <Style icon={<TableIcon />} label="Als Tabelle formatieren" caretAt={4} />
            <Style icon={<StyleIcon />} label="Zellenformatvorlagen" caretAt={4} />
          </GroupBody>
          <GroupFoot><FootLabel>Formatvorlagen</FootLabel></GroupFoot>
        </Group>

        <Group $w={98}>
          <GroupBody>
            <Style icon={<InsertCellIcon />} label="Einfügen" caretAt={13} />
            <Style icon={<DeleteCellIcon />} label="Löschen" caretAt={13} />
            <Style icon={<FormatCellIcon />} label="Format" caretAt={4} />
          </GroupBody>
          <GroupFoot><FootLabel>Zellen</FootLabel></GroupFoot>
        </Group>

        <Group $w={77}>
          <GroupBody>
            <Line $h={22.5} $pl={7}>
              <Slot $w={16}><SumIcon /></Slot>
              <Arrow $ml={6} />
              <Slot $w={16} $ml={7}><SortIcon /></Slot>
              <Arrow $ml={2} />
            </Line>
            <Line $h={22.5} $pl={7}>
              <Slot $w={15}><FillDownIcon /></Slot>
              <Arrow $ml={5} />
              <Slot $w={14} $ml={12}><FindIcon /></Slot>
              <Arrow $ml={6} />
            </Line>
            <Line $h={22.5} $pl={7}>
              <Slot $w={14}><EraserIcon /></Slot>
              <Arrow $ml={6} />
            </Line>
          </GroupBody>
          <GroupFoot><FootLabel>Bearbeiten</FootLabel></GroupFoot>
        </Group>
        <Collapse><Chevron /></Collapse>
      </Ribbon>

      <FormulaArea>
        <NameBox>G14<Arrow /></NameBox>
        <Dots $mt={7} $ml={14} $mr={13} />
        <FxBox>
          <Slot $w={11} $ml={13}><XIcon /></Slot>
          <Slot $w={13} $ml={24}><CheckIcon /></Slot>
          <FxLabel>fx</FxLabel>
        </FxBox>
        <FormulaInput><Chevron /></FormulaInput>
      </FormulaArea>

      <SheetArea>
        <Sheet>
          <Corner><CornerIcon /></Corner>
          {columns.map(c => <ColHead key={c}>{c}</ColHead>)}
          <RowHead>1</RowHead>
          {headerRow.map(h => <Cell key={h} $bold>{h}</Cell>)}
          {people.map((row, i) => (
            <React.Fragment key={row[0]}>
              <RowHead>{i + 2}</RowHead>
              {row.map((v, j) => (
                <Cell key={j} $right={j in rightPad} $pr={rightPad[j]}>{v}</Cell>
              ))}
            </React.Fragment>
          ))}
          {[5, 6, 7, 8, 9].map(n => (
            <React.Fragment key={n}>
              <RowHead>{n}</RowHead>
              {columns.map(c => <Cell key={c} />)}
            </React.Fragment>
          ))}
        </Sheet>
        <VScroll>
          <ScrollBtn><SmallTri dir="up" /></ScrollBtn>
          <VThumb />
          <VTrack />
          <ScrollBtn><SmallTri dir="down" /></ScrollBtn>
        </VScroll>
      </SheetArea>

      <TabBar>
        <NavSlot $w={5} $ml={27} $mt={9}><Chev /></NavSlot>
        <NavSlot $w={5} $ml={23} $mt={9}><Chev right /></NavSlot>
        <SheetTab>Tabelle1</SheetTab>
        <NavSlot $w={16} $ml={33} $mt={6}><PlusCircle /></NavSlot>
        <Dots $h={11} $mt={8} $ml={372} $mr={0} />
        <HScroll>
          <ScrollBtn><SmallTri dir="left" /></ScrollBtn>
          <HTrack />
          <HThumb />
          <ScrollBtn $ml={2}><SmallTri dir="right" /></ScrollBtn>
        </HScroll>
      </TabBar>

      <StatusBar>
        <Ready>Bereit</Ready>
        <Slot $w={13} $ml={14}><MacroIcon /></Slot>
        <ViewBtn $on $ml={625}><GridView /></ViewBtn>
        <ViewBtn><PageView /></ViewBtn>
        <ViewBtn><BreakView /></ViewBtn>
        <Slot $w={6} $ml={4}><Svg w={6} h={3}><path d="M0 0h6v2H0z" fill="#555" /></Svg></Slot>
        <ZoomTrack><ZoomThumb /></ZoomTrack>
        <Slot $w={7} $ml={3}><Svg w={7} h={7}><path d="M0 3h7v1.500H0zM2.800 0h1.500v7H2.800z" fill="#555" /></Svg></Slot>
        <ZoomValue>120%</ZoomValue>
      </StatusBar>
    </Window>
  );
}
